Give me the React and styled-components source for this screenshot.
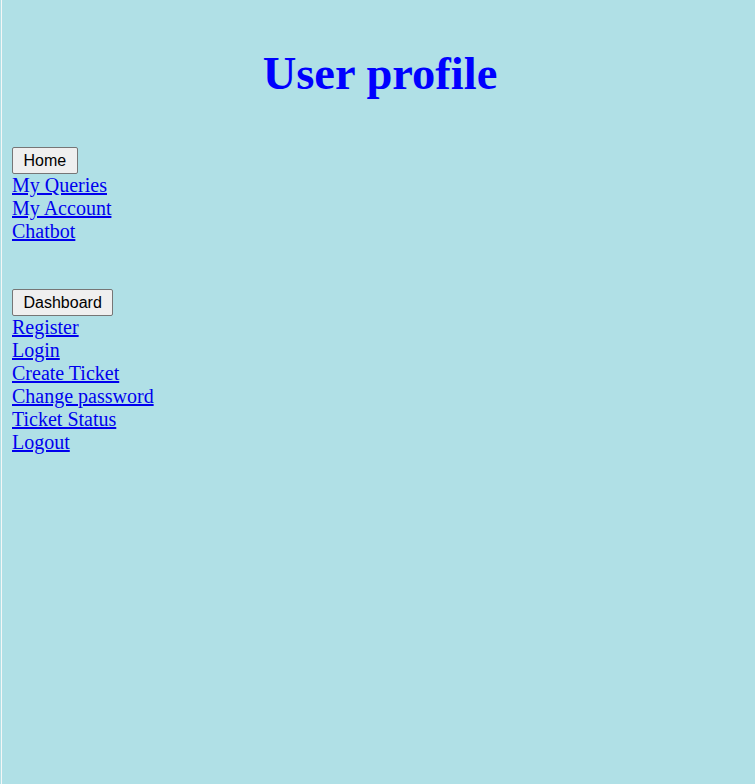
import React from "react";
import styled, { createGlobalStyle } from "styled-components";

const GlobalStyle = createGlobalStyle`
  html, body {
    margin: 0;
    padding: 0;
    background: #b0e0e6;
  }
  body {
    font-family: "Liberation Serif", "Times New Roman", serif;
  }
`;

const Page = styled.div`
  min-height: 100vh;
  margin-left: 1px;
  border-left: 1px solid #f4f6f6;
  padding: 47px 7px 0 10px;
  box-sizing: border-box;
  background: #b0e0e6;
`;

const Title = styled.h1`
  margin: 0 0 47px;
  text-align: center;
  font-family: "Liberation Serif", "Times New Roman", serif;
  font-size: 46.5px;
  font-weight: bold;
  color: #0000ff;
`;

const Nav = styled.nav`
  display: flex;
  flex-direction: column;
  align-items: flex-start;
  margin-bottom: ${(p) => (p.$gap ? "46px" : "0")};
`;

const NavButton = styled.button`
  font-family: "Liberation Sans", Arial, sans-serif;
  font-size: 16px;
  padding: 3.5px 10.5px;
  margin-bottom: 0;
  border: 1px solid #767676;
  border-radius: 2px;
  background: #efefef;
  color: #000;
  line-height: normal;
`;

const NavLink = styled.a`
  display: block;
  font-family: "Liberation Serif", "Times New Roman", serif;
  font-size: 20px;
  line-height: 23px;
  color: #0000ee;
  text-decoration: underline;
`;

const primary = ["My Queries", "My Account", "Chatbot"];
const secondary = [
  "Register",
  "Login",
  "Create Ticket",
  "Change password",
  "Ticket Status",
  "Logout",
];

export default function App() {
  return (
    <>
      <GlobalStyle />
      <Page>
        <Title>User profile</Title>
        <Nav $gap>
          <NavButton>Home</NavButton>
          {primary.map((l) => (
            <NavLink key={l} href="#">
              {l}
            </NavLink>
          ))}
        </Nav>
        <Nav>
          <NavButton>Dashboard</NavButton>
          {secondary.map((l) => (
            <NavLink key={l} href="#">
              {l}
            </NavLink>
          ))}
        </Nav>
      </Page>
    </>
  );
}
